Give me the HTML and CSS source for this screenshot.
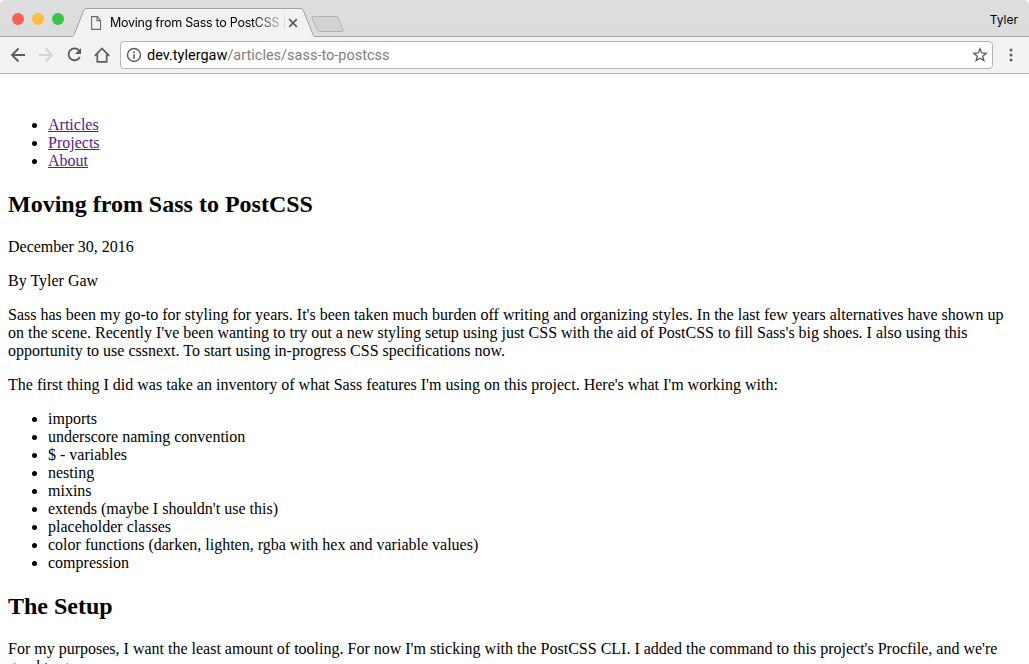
FILE: index.html
```html
<!DOCTYPE html>
<html lang="en">
<head>
<meta charset="utf-8">
<title>Moving from Sass to PostCSS</title>
<link rel="stylesheet" href="styles.css">
</head>
<body>
<div class="window">
  <header class="chrome">
    <div class="tabbar">
      <div class="lights"><i class="close"></i><i class="minimize"></i><i class="maximize"></i></div>
      <div class="tab">
        <svg class="tab-shape" width="243" height="29" viewBox="0 0 243 29"><path d="M0 29V28.5C1 28.5 1.500 28 2.200 26.500L11.500 3C12.300 1.200 13 .5 15 .5H228C230 .5 230.700 1.200 231.500 3L241 26.500C241.700 28 242 28.500 243 28.500V29Z" fill="#f2f2f2"/><path d="M0 28.5C1 28.5 1.500 28 2.200 26.500L11.500 3C12.300 1.200 13 .5 15 .5H228C230 .5 230.700 1.200 231.500 3L241 26.500C241.700 28 242 28.500 243 28.500" fill="none" stroke="#a0a0a0"/></svg>
        <div class="tab-content">
          <svg width="12" height="14" viewBox="0 0 12 14" fill="none" stroke="#6b6b6b" stroke-width="1.1"><path d="M.6 .6H6.300L9.500 4.400V13.400H.6ZM6 .6V4.600H9.500"/></svg>
          <span class="tab-title">Moving from Sass to PostCSS |</span>
          <svg class="tab-close" width="10" height="10" viewBox="0 0 10 10" stroke="#5c5c5c" stroke-width="1.700"><path d="M1.200 1.200L8.800 8.800M8.800 1.200L1.200 8.800"/></svg>
        </div>
      </div>
      <svg class="new-tab" width="36" height="18" viewBox="0 0 36 18"><path d="M3 1.500H26Q27.700 1.500 28.300 3L33 14.500Q33.600 16.500 32 16.500H10Q8 16.500 7.200 15L2 3.200Q1.400 1.500 3 1.500Z" fill="#d2d2d2" stroke="#b2b2ae"/></svg>
      <span class="user">Tyler</span>
    </div>
    <div class="toolbar">
      <svg class="nav" width="106" height="20" viewBox="0 0 106 20" fill="none" stroke="#5a5d5a" stroke-width="1.800">
        <path d="M15 10H2.500M8.500 3.500L2 10L8.500 16.500"/>
        <path d="M29 10H41.500M35.500 3.500L42 10L35.500 16.500" stroke="#d4d4d4"/>
        <path d="M69 5.500A5.900 5.900 0 1 0 69.800 12"/><path d="M71 3V9H65Z" fill="#5a5d5a" stroke="none"/>
        <path d="M84.800 10.900L92 3.500L99.200 10.900M87.300 9.500V16.800H96.700V9.500" stroke-width="1.700"/>
      </svg>
      <div class="omnibox">
        <svg width="16" height="16" viewBox="0 0 16 16"><circle cx="8" cy="8" r="6.500" fill="none" stroke="#5a5d5a" stroke-width="1.400"/><path d="M7.200 4.300H8.800V5.900H7.200ZM7.200 7.200H8.800V11.700H7.200Z" fill="#5a5d5a"/></svg>
        <span class="url">dev.tylergaw<span class="path">/articles/sass-to-postcss</span></span>
        <svg class="star" width="16" height="16" viewBox="0 0 16 16"><path d="M8 1.800L9.700 6L14.200 6.300L10.700 9.200L11.900 13.600L8 11.200L4.100 13.600L5.300 9.200L1.800 6.300L6.300 6Z" fill="none" stroke="#5a5d5a" stroke-width="1.300"/></svg>
      </div>
      <svg class="menu" width="4" height="14" viewBox="0 0 4 14" fill="#5f625d"><circle cx="2" cy="2" r="1.500"/><circle cx="2" cy="7" r="1.500"/><circle cx="2" cy="12" r="1.500"/></svg>
    </div>
  </header>
  <main class="page">
    <ul>
      <li><a class="link" href="#">Articles</a></li>
      <li><a class="link" href="#">Projects</a></li>
      <li><a class="link" href="#">About</a></li>
    </ul>
    <h2>Moving from Sass to PostCSS</h2>
    <p>December 30, 2016</p>
    <p>By Tyler Gaw</p>
    <p>Sass has been my go-to for styling for years. It's been taken much burden off writing and organizing styles. In the last few years alternatives have shown up<br>on the scene. Recently I've been wanting to try out a new styling setup using just CSS with the aid of PostCSS to fill Sass's big shoes. I also using this<br>opportunity to use cssnext. To start using in-progress CSS specifications now.</p>
    <p>The first thing I did was take an inventory of what Sass features I'm using on this project. Here's what I'm working with:</p>
    <ul>
      <li>imports</li>
      <li>underscore naming convention</li>
      <li>$ - variables</li>
      <li>nesting</li>
      <li>mixins</li>
      <li>extends (maybe I shouldn't use this)</li>
      <li>placeholder classes</li>
      <li>color functions (darken, lighten, rgba with hex and variable values)</li>
      <li>compression</li>
    </ul>
    <h2>The Setup</h2>
    <p>For my purposes, I want the least amount of tooling. For now I'm sticking with the PostCSS CLI. I added the command to this project's Procfile, and we're<br>good to go.</p>
  </main>
</div>
</body>
</html>
```
FILE: styles.css
```css
body { margin: 0; background: #fff; }
.window { height: 664px; overflow: hidden; }
.chrome { height: 74px; box-sizing: border-box; border-bottom: 1px solid #b5b5b5; background: #f2f2f2; border-radius: 5px 5px 0 0; overflow: hidden; }
.tabbar { display: flex; height: 37px; box-sizing: border-box; background: linear-gradient(#dedede, #dcdcdc); box-shadow: inset 0 -1px #a0a0a0; font: 13px Inter, "Liberation Sans", sans-serif; }
.lights { display: flex; gap: 8px; padding: 13px 0 0 12px; width: 60px; }
.lights i { width: 12px; height: 12px; border-radius: 50%; }
.close { background: #f75f58; }
.minimize { background: #fdbc40; }
.maximize { background: #35c64a; }
.tab { display: grid; width: 243px; margin-top: 8px; height: 29px; }
.tab-shape, .tab-content { grid-area: 1 / 1; }
.tab-content { display: flex; align-items: center; padding: 0 21px 0 19px; height: 29px; }
.tab-title { flex: none; width: 175px; margin-left: 7px; overflow: hidden; white-space: nowrap; font-size: 12.5px; color: #000; letter-spacing: -0.26px; -webkit-mask-image: linear-gradient(to right, #000 142px, transparent 178px); mask-image: linear-gradient(to right, #000 142px, transparent 178px); }
.tab-close { margin-left: 3px; }
.new-tab { margin: 15px 0 0 -5px; }
.user { margin: 12px 11px 0 auto; font-size: 12px; line-height: 16px; }
.toolbar { display: flex; align-items: center; height: 36px; padding: 0 0 0 10px; }
.nav { flex: none; margin-right: 4px; }
.omnibox { display: flex; align-items: center; width: 873px; height: 28px; box-sizing: border-box; padding: 0 4px 0 5px; border: 1px solid #b5b5b5; border-radius: 4px; background: #fff; }
.url { margin-left: 5px; padding-top: 2px; font: 14.5px/20px Roboto, sans-serif; white-space: nowrap; }
.path { color: #808080; }
.star { margin-left: auto; }
.menu { margin-left: 16px; }
.page { padding: 42px 8px 0; font: 16px/18px "Liberation Serif", "Times New Roman", serif; white-space: nowrap; color: #000; }
.page ul { margin: 0 0 20px; padding-left: 40px; }
.page h2 { margin: 0 0 20px; font-size: 24px; line-height: 28px; }
.page p { margin: 0 0 16px; }
.link { color: #551a8b; }
```
